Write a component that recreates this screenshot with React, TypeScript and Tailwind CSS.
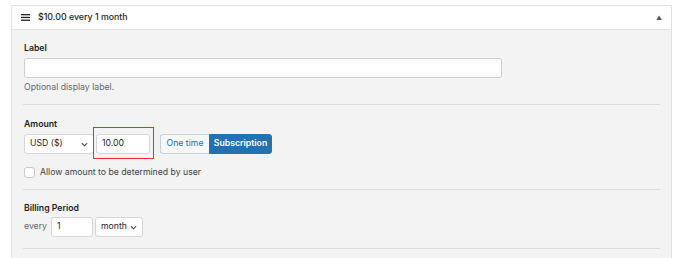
import React from 'react';

const font = { fontFamily: 'Inter, "Liberation Sans", sans-serif' };

const Chevron = () => (
  <svg width="7" height="5" viewBox="0 0 8 5" fill="none" className="text-[#3c434a]">
    <path d="M1 1l3 3 3-3" stroke="currentColor" strokeWidth="1.2" />
  </svg>
);

const Divider = () => <div className="h-px bg-[#dcdcde]" />;

export default function App() {
  return (
    <div className="w-[680px] h-[258px] overflow-hidden bg-white pt-[5px] pl-[11px] text-[#1d2327]" style={font}>
      <div className="w-[661px] border border-b-0 border-[#e2e2e4]">
        {/* header */}
        <div className="h-[24px] bg-white border-b border-[#e2e2e4] flex items-center pl-[9px] pr-[9px]">
          <svg width="9" height="7" viewBox="0 0 9 7" className="text-[#1d2327]">
            <rect x="0" y="0" width="9" height="1.3" fill="currentColor" />
            <rect x="0" y="2.8" width="9" height="1.3" fill="currentColor" />
            <rect x="0" y="5.6" width="9" height="1.3" fill="currentColor" />
          </svg>
          <span className="ml-[8px] text-[8.8px] font-medium leading-none">$10.00 every 1 month</span>
          <span className="ml-auto text-[6px] text-[#50575e] leading-none">▲</span>
        </div>

        {/* body */}
        <div className="bg-[#f3f3f3] px-[11px] pt-[11px]">
          <div className="text-[8.7px] font-semibold leading-[14px] mb-[3px] ml-px">Label</div>
          <input className="block w-[478px] h-[20px] ml-px bg-white border border-[#cfcfd1] rounded-[3px]" />
          <div className="mt-[2px] text-[8.7px] leading-[14px] text-[#646970] ml-px">Optional display label.</div>
          <div className="mt-[10px]"><Divider /></div>

          <div className="mt-[12px] text-[8.7px] font-semibold leading-[14px] mb-[3px] ml-px">Amount</div>
          <div className="flex items-center ml-px">
            <div className="w-[70px] h-[20px] bg-white border border-[#d6d6d8] rounded-[3px] flex items-center justify-between pl-[5px] pr-[5px] text-[8.7px]">
              <span>USD ($)</span>
              <Chevron />
            </div>
            <div className="relative ml-[2px]">
              <div className="w-[54px] h-[20px] bg-white border border-[#d6d6d8] rounded-[3px] flex items-center pl-[5px] text-[8.7px]">10.00</div>
              <span className="absolute -left-[3px] -top-[7px] w-[61px] h-[32px] border-[1.5px] border-[#e4322b] pointer-events-none" />
            </div>
            <div className="ml-[10px] flex h-[20px] text-[8.7px]">
              <div className="w-[49px] flex items-center justify-center bg-[#f6f7f7] border border-[#c5d2de] border-r-0 rounded-l-[3px] text-[#2271b1]">One time</div>
              <div className="w-[63px] flex items-center justify-center bg-[#2271b1] border border-[#2271b1] rounded-r-[3px] text-white font-semibold">Subscription</div>
            </div>
          </div>

          <div className="mt-[11px] flex items-center ml-px">
            <span className="w-[11px] h-[11px] bg-white border border-[#c8c8ca] rounded-[3px]" />
            <span className="ml-[5px] text-[8.7px] leading-[14px] text-[#3c434a]">Allow amount to be determined by user</span>
          </div>
          <div className="mt-[10px]"><Divider /></div>

          <div className="mt-[11px] text-[8.7px] font-semibold leading-[14px] mb-[2px] ml-px">Billing Period</div>
          <div className="flex items-center ml-px">
            <span className="text-[8.7px] text-[#646970]">every</span>
            <div className="ml-[4px] w-[42px] h-[20px] bg-white border border-[#d6d6d8] rounded-[3px] flex items-center pl-[5px] text-[8.7px]">1</div>
            <div className="ml-[2px] w-[48px] h-[20px] bg-white border border-[#d6d6d8] rounded-[3px] flex items-center justify-between pl-[5px] pr-[5px] text-[8.7px]">
              <span>month</span>
              <Chevron />
            </div>
          </div>
          <div className="mt-[11px]"><Divider /></div>
          <div className="h-[12px]" />
        </div>
      </div>
    </div>
  );
}
